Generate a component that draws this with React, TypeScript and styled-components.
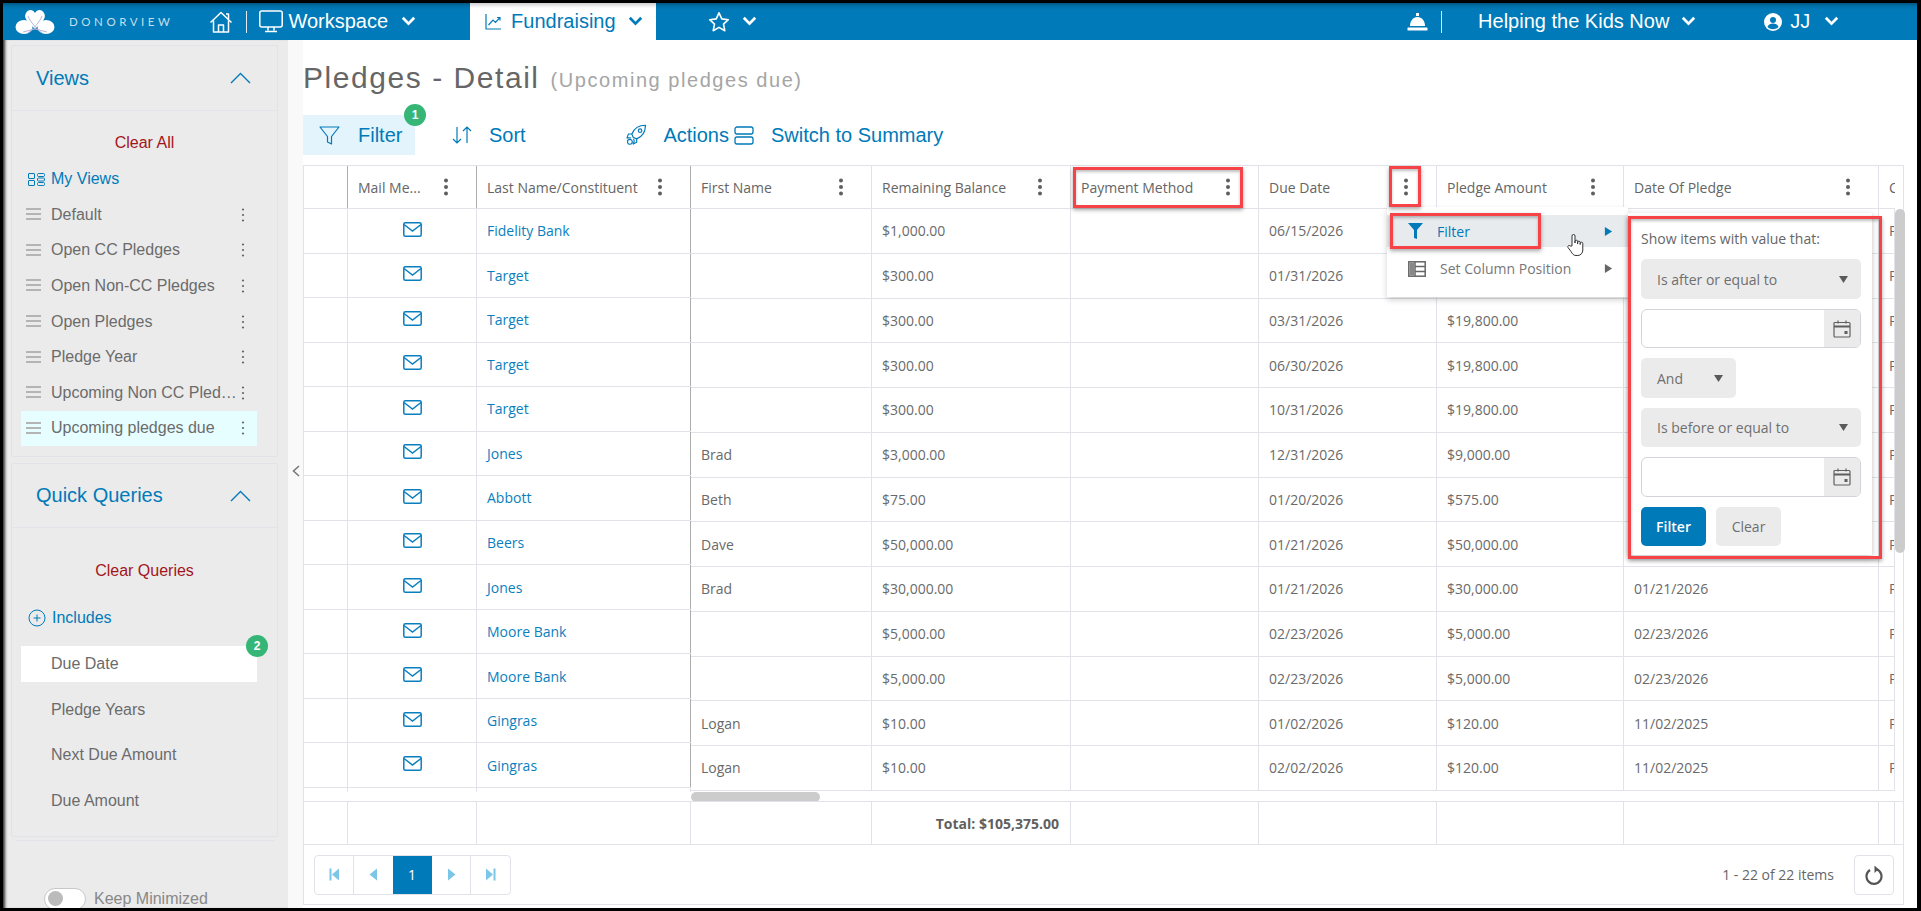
import React from 'react';
import styled, { createGlobalStyle } from 'styled-components';

const Global = createGlobalStyle`
  html, body { margin: 0; padding: 0; background: #000; height: 911px; overflow: hidden; }
  * { box-sizing: border-box; }
  body { font-family: "Liberation Sans", Arial, sans-serif; color: #666; }
`;

const BLUE = '#007ab8';
const LINE = '#e1e3e8';
const TABLE_FONT = '"Open Sans", "Liberation Sans", sans-serif';

const Frame = styled.div`
  position: relative;
  width: 1914px; height: 905px;
  margin: 3px 0 0 3px;
  background: #fff;
  display: flex; flex-direction: column;
  overflow: hidden;
`;
const TopBar = styled.header`
  height: 37px; flex: none;
  display: flex; align-items: center;
  color: #fff;
  background: linear-gradient(#00557f 0, #0070a9 3px, ${BLUE} 7px);
  font-size: 20px;
`;
const NavItem = styled.div<{ $ml?: number; $gap?: number }>`
  display: flex; align-items: center;
  margin-left: ${p => p.$ml ?? 0}px;
  gap: ${p => p.$gap ?? 5}px;
  white-space: nowrap;
`;
const ActiveTab = styled.div`
  margin-left: 54px;
  width: 186px; height: 37px;
  display: flex; align-items: center;
  padding-left: 15px; gap: 9px;
  background: linear-gradient(#cfcfcf 0, #fff 5px);
  color: ${BLUE};
  white-space: nowrap;
`;
const Brand = styled.span`
  font-size: 11.5px; letter-spacing: 3.55px; color: #c5dfee; margin-left: 9px;
  font-family: "Lato", sans-serif;
`;
const Sep = styled.span<{ $ml: number }>`
  width: 1px; height: 22px; background: #e8e8f4; margin-left: ${p => p.$ml}px;
`;

const Content = styled.div`flex: 1; display: flex; min-height: 0;`;
const Sidebar = styled.aside`
  width: 285px; flex: none;
  padding: 5px 10px 0 8px;
  background: #ebebeb;
  box-shadow: inset 4px 0 3px -2px #333;
`;
const Card = styled.section`
  border: 1px solid #e2e3e8;
  border-radius: 2px;
`;
const CardSecond = styled(Card)`margin-top: 6px; padding-bottom: 7px;`;
const CardFirst = styled(Card)`padding-bottom: 10px;`;
const CardHeader = styled.div<{ $h: number }>`
  height: ${p => p.$h}px;
  display: flex; align-items: center; justify-content: space-between;
  padding: 0 26px 0 24px;
  color: ${BLUE}; font-size: 20px;
  border-bottom: 1px solid #e2e3e8;
`;
const ClearLink = styled.div<{ $pt: number; $pb: number }>`
  padding: ${p => p.$pt}px 0 ${p => p.$pb}px;
  text-align: center; line-height: 22px;
  font-size: 16px; color: #a3151c;
`;
const LinkRow = styled.div`
  height: 36px; display: flex; align-items: center; gap: 6px;
  padding-left: 16px;
  color: ${BLUE}; font-size: 16px;
`;
const ViewRow = styled.div<{ $active?: boolean }>`
  height: 35.6px; width: 236px; margin-left: 9px;
  display: flex; align-items: center;
  padding: 0 12px 0 5px;
  background: ${p => (p.$active ? '#e6feff' : 'transparent')};
  font-size: 16px; color: #6b6b6b;
`;
const ViewName = styled.span`
  flex: 1; margin-left: 10px; min-width: 0;
  overflow: hidden; white-space: nowrap; text-overflow: ellipsis;
`;
const QueryRow = styled.div<{ $active?: boolean }>`
  position: relative;
  height: 36px; width: 236px; margin: 0 0 9.67px 9px;
  display: flex; align-items: center;
  padding-left: 30px;
  background: ${p => (p.$active ? '#fff' : 'transparent')};
  font-size: 16px; color: #6b6b6b;
`;
const QueryList = styled.div`margin-top: 10px;`;
const Badge = styled.span<{ $x: number; $y: number }>`
  position: absolute; right: ${p => p.$x}px; top: ${p => p.$y}px;
  width: 22px; height: 22px; border-radius: 50%;
  background: #35b677; color: #fff;
  display: flex; align-items: center; justify-content: center;
  font-size: 12px; font-weight: 700; z-index: 2;
`;
const SideRule = styled.div`height: 1px; margin: 3px 4px 0; background: #e2e3e8;`;
const ToggleRow = styled.div`
  margin: 47px 0 0 33px;
  display: flex; align-items: center; gap: 8px;
  color: #888; font-size: 16px;
`;
const Toggle = styled.span`
  width: 42px; height: 22px; border-radius: 11px;
  background: #fff; border: 1px solid #c8c8c8;
  display: flex; align-items: center; padding-left: 3px;
`;
const Knob = styled.span`width: 15px; height: 15px; border-radius: 50%; background: #bbb;`;

const Strip = styled.div`
  width: 15px; flex: none; background: #f9f9f9;
  display: flex; align-items: flex-start; justify-content: center;
  padding-top: 425px;
`;

const Main = styled.main`
  flex: 1; min-width: 0;
  padding-right: 13px;
  display: flex; flex-direction: column;
`;
const TitleRow = styled.div`
  height: 75px; display: flex; align-items: center; padding-top: 1px;
  gap: 11px; white-space: nowrap;
`;
const Title = styled.h1`
  margin: 0; font-size: 30px; font-weight: 400; color: #666; letter-spacing: 1.55px;
`;
const Subtitle = styled.span`
  font-size: 20px; color: #a5a5a5; letter-spacing: 1.55px; padding-top: 5px;
`;
const Toolbar = styled.div`height: 40px; display: flex; align-items: stretch;`;
const ToolButton = styled.div<{ $w: number; $pl: number; $gap: number; $active?: boolean }>`
  position: relative;
  width: ${p => p.$w}px; padding-left: ${p => p.$pl}px;
  display: flex; align-items: center; gap: ${p => p.$gap}px;
  background: ${p => (p.$active ? '#e3f4fc' : 'transparent')};
  color: ${BLUE}; font-size: 20px; white-space: nowrap;
`;

const TableBox = styled.div`
  margin-top: 10px; height: 740px;
  border: 1px solid ${LINE};
  display: flex; flex-direction: column;
  font-family: ${TABLE_FONT}; font-size: 14px;
`;
const Panes = styled.div`flex: none; height: 635px; display: flex;`;
const Pane = styled.div<{ $w: number }>`width: ${p => p.$w}px; flex: none; overflow: hidden;`;
const Row = styled.div<{ $cols: string; $h: number }>`
  display: grid; grid-template-columns: ${p => p.$cols};
  height: ${p => p.$h}px;
  border-bottom: 1px solid ${LINE};
`;
const HeadCell = styled.div<{ $dark?: boolean }>`
  min-width: 0;
  display: flex; align-items: center; justify-content: space-between;
  padding: 0 27px 0 10px;
  border-right: 1px solid ${p => (p.$dark ? '#adadad' : LINE)};
  color: #656565; white-space: nowrap; overflow: hidden;
`;
const HeadLabel = styled.span`overflow: hidden; text-overflow: ellipsis;`;
const Cell = styled.div<{ $dark?: boolean; $center?: boolean; $link?: boolean }>`
  min-width: 0; overflow: hidden; white-space: nowrap;
  display: flex; align-items: center;
  justify-content: ${p => (p.$center ? 'center' : 'flex-start')};
  padding: 0 0 0 10px;
  ${p => (p.$center ? 'padding: 0 0 3px 0;' : '')}
  border-right: 1px solid ${p => (p.$dark ? '#adadad' : LINE)};
  color: ${p => (p.$link ? '#0a7fbe' : '#6a6a6a')};
`;
const LockStub = styled.div`
  display: grid; grid-template-columns: 44px 129px 214px; height: 4px;
`;
const StubCell = styled.div`border-right: 1px solid ${LINE};`;
const HScroll = styled.div`width: 129px; height: 10px; margin-top: 1px; border-radius: 5px; background: #ccc;`;
const Gutter = styled.div`flex: 1; padding-top: 43px; display: flex; justify-content: center;`;
const VThumb = styled.div`width: 10px; height: 344px; border-radius: 5px; background: #ccc;`;
const FooterRow = styled.div<{ $cols: string }>`
  flex: none; height: 44px;
  display: grid; grid-template-columns: ${p => p.$cols};
  border-top: 1px solid ${LINE};
  border-bottom: 1px solid ${LINE};
`;
const FootCell = styled.div`
  border-right: 1px solid ${LINE};
  display: flex; align-items: center; justify-content: flex-end;
  padding-right: 11px; font-weight: 700; color: #5f5f5f; white-space: nowrap;
`;
const Pager = styled.div`
  flex: 1; display: flex; align-items: center; justify-content: space-between;
  padding: 0 9px 0 10px;
`;
const PageGroup = styled.div`
  display: flex; height: 40px;
  border: 1px solid ${LINE}; border-radius: 4px;
`;
const PageBtn = styled.div<{ $active?: boolean; $noline?: boolean }>`
  width: 39px; display: flex; align-items: center; justify-content: center;
  background: ${p => (p.$active ? BLUE : 'transparent')};
  color: #fff; font-size: 14px;
  border-right: 1px solid ${p => (p.$noline ? 'transparent' : LINE)};
  &:last-child { border-right: 0; }
`;
const PagerRight = styled.div`display: flex; align-items: center; gap: 20px; color: #666;`;
const RefreshBtn = styled.div`
  width: 40px; height: 40px; border: 1px solid ${LINE}; border-radius: 4px;
  display: flex; align-items: center; justify-content: center;
`;

const Menu = styled.div`
  position: absolute; left: 1384px; top: 204px;
  width: 241px; height: 90px;
  background: #fff;
  padding-top: 8px;
  box-shadow: 0 3px 6px rgba(0,0,0,.18);
  font-family: ${TABLE_FONT}; font-size: 14px;
`;
const MenuRow = styled.div<{ $active?: boolean }>`
  height: ${p => (p.$active ? 32 : 43)}px;
  display: flex; align-items: center;
  padding: 0 15px 0 21px; gap: 14px;
  background: ${p => (p.$active ? '#e8ebee' : 'transparent')};
  color: ${p => (p.$active ? BLUE : '#777')};
`;
const MenuLabel = styled.span`flex: 1;`;
const FilterPanel = styled.div`
  position: absolute; left: 1625px; top: 210px;
  width: 244px; height: 342px;
  background: #fff;
  padding: 16px 10px 0 13px;
  box-shadow: 0 2px 6px rgba(0,0,0,.25);
  font-family: ${TABLE_FONT}; font-size: 14px; color: #666;
  display: flex; flex-direction: column;
`;
const PanelLabel = styled.div`height: 20px; line-height: 20px; white-space: nowrap;`;
const Select = styled.div<{ $w: number; $h: number; $mt: number }>`
  width: ${p => p.$w}px; height: ${p => p.$h}px; margin-top: ${p => p.$mt}px;
  flex: none; border-radius: 5px; background: #ebebeb;
  display: flex; align-items: center; justify-content: space-between;
  padding: 0 13px 0 16px; color: #6f6f6f;
`;
const DateBox = styled.div<{ $h: number; $mt: number }>`
  width: 220px; height: ${p => p.$h}px; margin-top: ${p => p.$mt}px;
  flex: none; border: 1px solid #d2d4d9; border-radius: 6px;
  display: flex; justify-content: flex-end; overflow: hidden;
`;
const DateBtn = styled.div`
  width: 36px; background: #ebebeb;
  display: flex; align-items: center; justify-content: center;
`;
const PanelButtons = styled.div`display: flex; gap: 10px; margin-top: 10px;`;
const PanelBtn = styled.div<{ $primary?: boolean }>`
  width: 65px; height: 39px; border-radius: 5px;
  display: flex; align-items: center; justify-content: center;
  background: ${p => (p.$primary ? BLUE : '#ebebeb')};
  color: ${p => (p.$primary ? '#fff' : '#6f6f6f')};
  ${p => (p.$primary ? 'font-weight: 600;' : '')}
`;
const Highlight = styled.div<{ $x: number; $y: number; $w: number; $h: number }>`
  position: absolute;
  left: ${p => p.$x}px; top: ${p => p.$y}px;
  width: ${p => p.$w}px; height: ${p => p.$h}px;
  border: 3px solid #f64347;
  box-shadow: 0 2px 4px rgba(0,0,0,.35), inset 0 2px 3px rgba(0,0,0,.25);
  pointer-events: none; z-index: 5;
`;
const CursorHolder = styled.div`position: absolute; left: 1563px; top: 230px; z-index: 6; line-height: 0;`;

/* drawings */
const Chevron = ({ color = '#fff', w = 15 }: { color?: string; w?: number }) => (
  <svg width={w} height={w * 0.67} viewBox="0 0 15 10" fill="none"><path d="M1.8 1.8 7.5 7.6l5.7-5.8" stroke={color} strokeWidth="2.8" /></svg>
);
const UpChevron = () => (
  <svg width="21" height="12" viewBox="0 0 21 12" fill="none"><path d="M1 11 10.5 1.5 20 11" stroke={BLUE} strokeWidth="1.4" /></svg>
);
const Logo = () => (
  <svg width="40" height="28" viewBox="0 0 40 28">
    <ellipse cx="9" cy="19" rx="8.5" ry="7" fill="#fff" />
    <ellipse cx="31" cy="19" rx="8.5" ry="7" fill="#fff" />
    <path d="M20 21C13 14 8 10 11 5c2-4 7-4 9 0 2-4 7-4 9 0 3 5-2 9-9 16z" fill="#fff" />
    <path d="M8 24 20 21 32 24 M13 8c2 6 10 14 14 17M27 8c-2 6-10 14-14 17" stroke="#b9b3d6" strokeWidth="1" fill="none" />
  </svg>
);
const Home = () => (
  <svg width="24" height="24" viewBox="0 0 24 24" fill="none" stroke="#fff" strokeWidth="1.5" strokeLinejoin="round">
    <path d="M1.5 12.5 12 2.5l10.5 10" /><path d="M4.5 10.5V22h15V10.5" /><path d="M9.5 22v-7h5v7" /><path d="M17 4h2.5v5" />
  </svg>
);
const Monitor = () => (
  <svg width="24" height="24" viewBox="0 0 24 24" fill="none" stroke="#fff" strokeWidth="1.5">
    <rect x=".8" y="1" width="22.4" height="16" rx="2" /><path d="M9 17v3.5M15 17v3.5M6 21.5h12" />
  </svg>
);
const TrendBox = () => (
  <svg width="17" height="17" viewBox="0 0 17 17" fill="none" stroke={BLUE} strokeWidth="1.2">
    <path d="M1 1v15h15" /><path d="M3.5 12 8 7l2.5 2.5L14.5 5M12 4.5h3v3" />
  </svg>
);
const StarIcon = () => (
  <svg width="22" height="21" viewBox="0 0 22 21" fill="none" stroke="#fff" strokeWidth="1.6" strokeLinejoin="round">
    <path d="M11 1.8l2.8 6.1 6.5.8-4.8 4.5 1.3 6.5L11 16.4l-5.8 3.3 1.3-6.5L1.7 8.7l6.5-.8z" />
  </svg>
);
const Bell = () => (
  <svg width="21" height="21" viewBox="0 0 21 21" fill="#fff">
    <rect x="9" y="2" width="3" height="3" /><path d="M3 15c0-5 3-9 7.5-9S18 10 18 15z" /><rect x="0.5" y="16.5" width="20" height="3" rx=".5" />
  </svg>
);
const UserIcon = () => (
  <svg width="18" height="18" viewBox="0 0 18 18">
    <circle cx="9" cy="9" r="9" fill="#fff" /><circle cx="9" cy="7" r="3" fill={BLUE} /><path d="M3.5 14c1-3 3-3.5 5.5-3.5s4.500.5 5.500 3.500c-3 3-8 3-11 0z" fill={BLUE} />
  </svg>
);
const FunnelOutline = () => (
  <svg width="21" height="21" viewBox="0 0 21 21" fill="none" stroke={BLUE} strokeWidth="1.2" strokeLinejoin="round">
    <path d="M1 2h19l-7.500 9.500v7.500l-4-2v-5.500z" />
  </svg>
);
const SortIcon = () => (
  <svg width="20" height="20" viewBox="0 0 20 20" fill="none" stroke={BLUE} strokeWidth="1.2">
    <path d="M5 2v16M1 14l4 4 4-4M15 18V2M11 6l4-4 4 4" />
  </svg>
);
const Rocket = () => (
  <svg width="21" height="22" viewBox="0 0 21 22" fill="none" stroke={BLUE} strokeWidth="1.2" strokeLinejoin="round">
    <path d="M7.500 13.500 6 10c2-5 7-9 14-9 0 7-4 12-9 14z" /><circle cx="14.500" cy="6.500" r="1.800" />
    <path d="M6 10H2.500L1 14h4M11 15v3.500L7 20.500" /><circle cx="4" cy="18" r="2.500" /><path d="M7.500 15c1.500 1 1 4-.5 5" />
  </svg>
);
const SwitchIcon = () => (
  <svg width="25" height="19" viewBox="0 0 25 19" fill="none" stroke={BLUE} strokeWidth="1.3">
    <rect x="3" y="1" width="18" height="7" rx="2" /><rect x="3" y="11" width="18" height="7" rx="2" />
  </svg>
);
const ViewsIcon = () => (
  <svg width="17" height="13" viewBox="0 0 17 13" fill="none" stroke={BLUE} strokeWidth="1">
    <rect x=".5" y=".5" width="6" height="5" rx=".5" /><rect x=".5" y="7.500" width="6" height="5" rx=".5" />
    <rect x="9.500" y=".5" width="7" height="3" rx="1" /><rect x="9.500" y="5" width="7" height="3" rx="1" /><rect x="9.500" y="9.500" width="7" height="3" rx="1" />
  </svg>
);
const Plus = () => (
  <svg width="18" height="18" viewBox="0 0 18 18" fill="none" stroke={BLUE} strokeWidth="1">
    <circle cx="9" cy="9" r="8" /><path d="M9 5.500v7M5.500 9h7" />
  </svg>
);
const Drag = () => (
  <svg width="15" height="13" viewBox="0 0 15 13" fill="#b4b4b4" style={{ flex: 'none' }}>
    <rect y="0" width="15" height="2" /><rect y="5" width="15" height="2" /><rect y="10" width="15" height="2" />
  </svg>
);
const Dots = ({ big }: { big?: boolean }) => (
  big ? (
    <svg width="6" height="18" viewBox="0 0 6 18" fill="#5f5f5f" style={{ flex: 'none' }}>
      <circle cx="3" cy="2.500" r="2" /><circle cx="3" cy="9" r="2" /><circle cx="3" cy="15.500" r="2" />
    </svg>
  ) : (
    <svg width="4" height="14" viewBox="0 0 4 14" fill="#666" style={{ flex: 'none' }}>
      <circle cx="2" cy="1.500" r="1.100" /><circle cx="2" cy="7" r="1.100" /><circle cx="2" cy="12.500" r="1.100" />
    </svg>
  )
);
const Mail = () => (
  <svg width="19" height="15" viewBox="0 0 19 15" fill="none" stroke="#0a7fbe" strokeWidth="1.500">
    <rect x=".8" y=".8" width="17.400" height="13.400" rx="1.500" /><path d="M1 2.500 9.500 9 18 2.500" />
  </svg>
);
const Caret = ({ color = '#5a5a5a', dir = 'down', size = 9 }: { color?: string; dir?: 'down' | 'right' | 'left'; size?: number }) => (
  <svg width={size} height={size} viewBox="0 0 10 10" fill={color}>
    {dir === 'down' && <path d="M0 1h10L5 9z" />}
    {dir === 'right' && <path d="M1 0l8 5-8 5z" />}
    {dir === 'left' && <path d="M9 0 1 5l8 5z" />}
  </svg>
);
const FunnelSolid = () => (
  <svg width="15" height="16" viewBox="0 0 15 16" fill={BLUE}><path d="M0 0h15L9 7v9l-3-1V7z" /></svg>
);
const ColumnIcon = () => (
  <svg width="18" height="16" viewBox="0 0 18 16" fill="none" stroke="#666" strokeWidth="1.500">
    <rect x=".8" y=".8" width="16.400" height="14.400" /><path d="M7 1v14M7 5.500h10M7 10.500h10" /><rect x="1.500" y="1.500" width="5" height="13" fill="#888" stroke="none" />
  </svg>
);
const Calendar = () => (
  <svg width="18" height="18" viewBox="0 0 18 18" fill="none" stroke="#5f5f5f" strokeWidth="1.200">
    <rect x="1" y="2.500" width="16" height="14.500" rx="1" /><path d="M1 6.500h16" strokeWidth="2" /><path d="M5 .5v3M13 .5v3" /><rect x="11.500" y="11" width="3" height="3" fill="#5f5f5f" stroke="none" />
  </svg>
);
const HandCursor = () => (
  <svg width="20" height="24" viewBox="0 0 20 24" fill="#fff" stroke="#333" strokeWidth="1" strokeLinejoin="round">
    <path d="M6 13V3a1.500 1.500 0 0 1 3 0v7V8.500a1.300 1.300 0 0 1 2.600 0V11 9.500a1.300 1.300 0 0 1 2.600 0V11.500 10.500a1.300 1.300 0 0 1 2.600 0V17c0 3-2 5.500-5 5.500H10c-2.500 0-3.500-1.500-5-4l-3-4c-.8-1.500 1-2.800 2.200-1.500z" />
  </svg>
);
const PagerIcon = ({ kind }: { kind: 'first' | 'prev' | 'next' | 'last' }) => (
  <svg width="11" height="13" viewBox="0 0 11 13" fill="#7cc7e8">
    {kind === 'first' && <><rect x="0.500" y="0.500" width="2" height="12" /><path d="M10 0.500v12L3 6.500z" /></>}
    {kind === 'prev' && <path d="M9 0.500v12L1.500 6.500z" />}
    {kind === 'next' && <path d="M2 0.500v12l7.500-6z" />}
    {kind === 'last' && <><rect x="8.500" y="0.500" width="2" height="12" /><path d="M1 0.500v12l7-6z" /></>}
  </svg>
);
const Refresh = () => (
  <svg width="18" height="20" viewBox="0 0 18 20" fill="none" stroke="#555" strokeWidth="2.200">
    <path d="M11.500 4.300A7.500 7.500 0 1 1 5 5" /><path d="M9.500 0.500 13.500 4.300 9.500 8z" fill="#555" stroke="none" />
  </svg>
);
const LeftChev = () => (
  <svg width="8" height="12" viewBox="0 0 8 12" fill="none" stroke="#777" strokeWidth="1.500"><path d="M7 1 1.500 6 7 11" /></svg>
);

const LOCK = '44px 129px 214px';
const SCROLL = '181px 199px 188px 178px 187px 255px 16px';
const FOOT = '44px 129px 214px 181px 199px 188px 178px 187px 255px 16px 1fr';

type R = { last: string; first: string; bal: string; due: string; amt: string; date: string };
const rows: R[] = [
  { last: 'Fidelity Bank', first: '', bal: '$1,000.00', due: '06/15/2026', amt: '$1,000.00', date: '06/15/2025' },
  { last: 'Target', first: '', bal: '$300.00', due: '01/31/2026', amt: '$19,800.00', date: '01/31/2025' },
  { last: 'Target', first: '', bal: '$300.00', due: '03/31/2026', amt: '$19,800.00', date: '01/31/2025' },
  { last: 'Target', first: '', bal: '$300.00', due: '06/30/2026', amt: '$19,800.00', date: '01/31/2025' },
  { last: 'Target', first: '', bal: '$300.00', due: '10/31/2026', amt: '$19,800.00', date: '01/31/2025' },
  { last: 'Jones', first: 'Brad', bal: '$3,000.00', due: '12/31/2026', amt: '$9,000.00', date: '12/31/2025' },
  { last: 'Abbott', first: 'Beth', bal: '$75.00', due: '01/20/2026', amt: '$575.00', date: '01/20/2026' },
  { last: 'Beers', first: 'Dave', bal: '$50,000.00', due: '01/21/2026', amt: '$50,000.00', date: '01/21/2026' },
  { last: 'Jones', first: 'Brad', bal: '$30,000.00', due: '01/21/2026', amt: '$30,000.00', date: '01/21/2026' },
  { last: 'Moore Bank', first: '', bal: '$5,000.00', due: '02/23/2026', amt: '$5,000.00', date: '02/23/2026' },
  { last: 'Moore Bank', first: '', bal: '$5,000.00', due: '02/23/2026', amt: '$5,000.00', date: '02/23/2026' },
  { last: 'Gingras', first: 'Logan', bal: '$10.00', due: '01/02/2026', amt: '$120.00', date: '11/02/2025' },
  { last: 'Gingras', first: 'Logan', bal: '$10.00', due: '02/02/2026', amt: '$120.00', date: '11/02/2025' },
];
const views = ['Default', 'Open CC Pledges', 'Open Non-CC Pledges', 'Open Pledges', 'Pledge Year', 'Upcoming Non CC Pledges', 'Upcoming pledges due'];
const scrollHeads = ['Remaining Balance', 'Payment Method', 'Due Date', 'Pledge Amount', 'Date Of Pledge'];

export default function App() {
  return (
    <>
      <Global />
      <Frame>
        <TopBar>
          <NavItem $ml={12}><Logo /><Brand>DONORVIEW</Brand></NavItem>
          <NavItem $ml={36}><Home /></NavItem>
          <Sep $ml={13} />
          <NavItem $ml={12} $gap={5}><Monitor />Workspace<NavItem $ml={8}><Chevron /></NavItem></NavItem>
          <ActiveTab><TrendBox />Fundraising<NavItem $ml={3}><Chevron color={BLUE} /></NavItem></ActiveTab>
          <NavItem $ml={52} $gap={12}><StarIcon /><Chevron /></NavItem>
          <NavItem $ml={650}><Bell /></NavItem>
          <Sep $ml={13} />
          <NavItem $ml={36} $gap={12}>Helping the Kids Now<Chevron /></NavItem>
          <NavItem $ml={68} $gap={8}><UserIcon />JJ<NavItem $ml={6}><Chevron /></NavItem></NavItem>
        </TopBar>
        <Content>
          <Sidebar>
            <CardFirst>
              <CardHeader $h={65}>Views<UpChevron /></CardHeader>
              <ClearLink $pt={21} $pb={7}>Clear All</ClearLink>
              <LinkRow><ViewsIcon />My Views</LinkRow>
              {views.map((v, i) => (
                <ViewRow key={v} $active={i === 6}><Drag /><ViewName>{v}</ViewName><Dots /></ViewRow>
              ))}
            </CardFirst>
            <CardSecond>
              <CardHeader $h={64}>Quick Queries<UpChevron /></CardHeader>
              <ClearLink $pt={32} $pb={18}>Clear Queries</ClearLink>
              <LinkRow><Plus />Includes</LinkRow>
              <QueryList>
                <QueryRow $active>Due Date<Badge $x={-11} $y={-11}>2</Badge></QueryRow>
                <QueryRow>Pledge Years</QueryRow>
                <QueryRow>Next Due Amount</QueryRow>
                <QueryRow>Due Amount</QueryRow>
              </QueryList>
            </CardSecond>
            <SideRule />
            <ToggleRow><Toggle><Knob /></Toggle>Keep Minimized</ToggleRow>
          </Sidebar>
          <Strip><LeftChev /></Strip>
          <Main>
            <TitleRow><Title>Pledges - Detail</Title><Subtitle>(Upcoming pledges due)</Subtitle></TitleRow>
            <Toolbar>
              <ToolButton $w={112} $pl={16} $gap={18} $active><FunnelOutline />Filter<Badge $x={-11} $y={-11}>1</Badge></ToolButton>
              <ToolButton $w={161} $pl={37} $gap={17}><SortIcon />Sort</ToolButton>
              <ToolButton $w={153} $pl={50} $gap={17}><Rocket />Actions</ToolButton>
              <ToolButton $w={300} $pl={3} $gap={14}><SwitchIcon />Switch to Summary</ToolButton>
            </Toolbar>
            <TableBox>
              <Panes>
                <Pane $w={387}>
                  <Row $cols={LOCK} $h={43}>
                    <HeadCell $dark />
                    <HeadCell $dark><HeadLabel>Mail Me...</HeadLabel><Dots big /></HeadCell>
                    <HeadCell $dark><HeadLabel>Last Name/Constituent</HeadLabel><Dots big /></HeadCell>
                  </Row>
                  {rows.map((r, i) => (
                    <Row key={i} $cols={LOCK} $h={44.54}>
                      <Cell />
                      <Cell $center><Mail /></Cell>
                      <Cell $link $dark>{r.last}</Cell>
                    </Row>
                  ))}
                  <LockStub><StubCell /><StubCell /><StubCell /></LockStub>
                </Pane>
                <Pane $w={1204}>
                  <Row $cols={SCROLL} $h={43}>
                    <HeadCell><HeadLabel>First Name</HeadLabel><Dots big /></HeadCell>
                    {scrollHeads.map(h => <HeadCell key={h}><HeadLabel>{h}</HeadLabel><Dots big /></HeadCell>)}
                    <HeadCell>Campaign</HeadCell>
                  </Row>
                  {rows.map((r, i) => (
                    <Row key={i} $cols={SCROLL} $h={44.75}>
                      <Cell>{r.first}</Cell>
                      <Cell>{r.bal}</Cell>
                      <Cell />
                      <Cell>{r.due}</Cell>
                      <Cell>{r.amt}</Cell>
                      <Cell>{r.date}</Cell>
                      <Cell>Paid</Cell>
                    </Row>
                  ))}
                  <HScroll />
                </Pane>
                <Gutter><VThumb /></Gutter>
              </Panes>
              <FooterRow $cols={FOOT}>
                <FootCell /><FootCell /><FootCell /><FootCell />
                <FootCell>Total: $105,375.00</FootCell>
                <FootCell /><FootCell /><FootCell /><FootCell /><FootCell />
              </FooterRow>
              <Pager>
                <PageGroup>
                  <PageBtn><PagerIcon kind="first" /></PageBtn>
                  <PageBtn $noline><PagerIcon kind="prev" /></PageBtn>
                  <PageBtn $active $noline>1</PageBtn>
                  <PageBtn><PagerIcon kind="next" /></PageBtn>
                  <PageBtn><PagerIcon kind="last" /></PageBtn>
                </PageGroup>
                <PagerRight>1 - 22 of 22 items<RefreshBtn><Refresh /></RefreshBtn></PagerRight>
              </Pager>
            </TableBox>
          </Main>
        </Content>

        <Menu>
          <MenuRow $active><FunnelSolid /><MenuLabel>Filter</MenuLabel><Caret color={BLUE} dir="right" /></MenuRow>
          <MenuRow><ColumnIcon /><MenuLabel>Set Column Position</MenuLabel><Caret color="#666" dir="right" /></MenuRow>
        </Menu>
        <FilterPanel>
          <PanelLabel>Show items with value that:</PanelLabel>
          <Select $w={220} $h={40} $mt={10}>Is after or equal to<Caret /></Select>
          <DateBox $h={39} $mt={10}><DateBtn><Calendar /></DateBtn></DateBox>
          <Select $w={95} $h={40} $mt={10}>And<Caret /></Select>
          <Select $w={220} $h={39} $mt={10}>Is before or equal to<Caret /></Select>
          <DateBox $h={40} $mt={10}><DateBtn><Calendar /></DateBtn></DateBox>
          <PanelButtons><PanelBtn $primary>Filter</PanelBtn><PanelBtn>Clear</PanelBtn></PanelButtons>
        </FilterPanel>
        <CursorHolder><HandCursor /></CursorHolder>
        <Highlight $x={1070} $y={164} $w={170} $h={41} />
        <Highlight $x={1386} $y={163} $w={32} $h={41} />
        <Highlight $x={1387} $y={210} $w={151} $h={36} />
        <Highlight $x={1625} $y={213} $w={254} $h={343} />
      </Frame>
    </>
  );
}
